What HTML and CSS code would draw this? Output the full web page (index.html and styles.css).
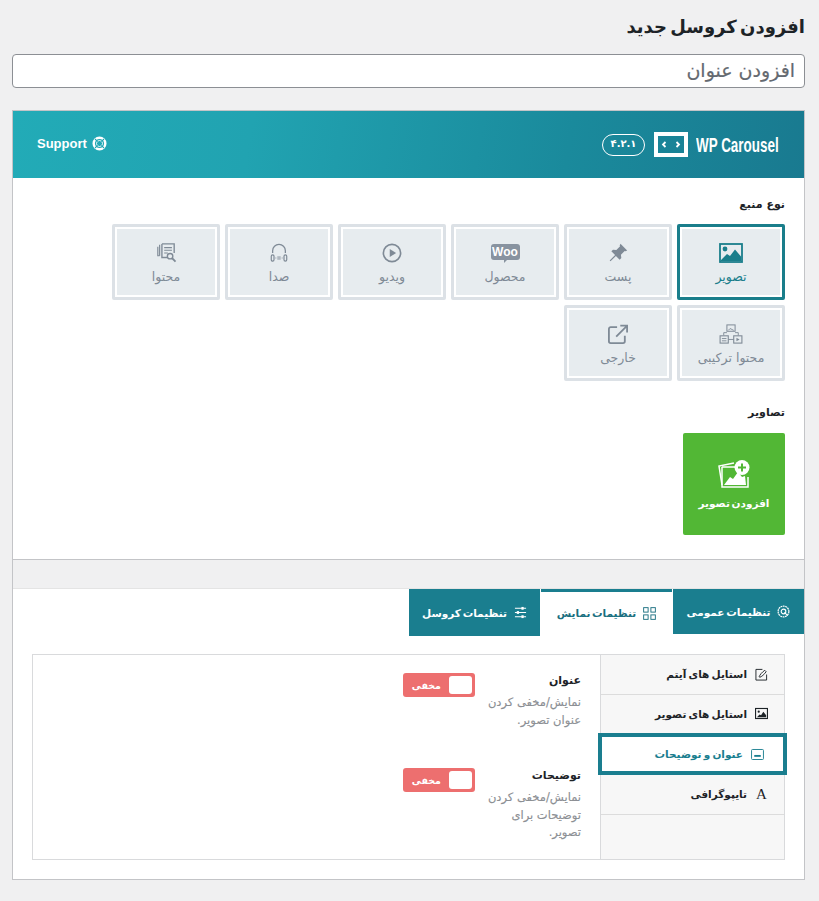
FILE: index.html
```html
<!DOCTYPE html>
<html lang="fa" dir="rtl">
<head>
<meta charset="utf-8">
<title>افزودن کروسل جدید</title>
<link rel="stylesheet" href="styles.css">
</head>
<body>
<h1 class="page-title">افزودن کروسل جدید</h1>
<div class="title-input">افزودن عنوان</div>
<main class="box">
  <header class="head">
    <div class="brand">
      <span class="brand-name" dir="ltr">WP Carousel</span>
      <svg class="brand-icon" viewBox="0 0 34 25"><rect x="2" y="2" width="30" height="21" fill="none" stroke="#fff" stroke-width="4"/><path d="M11.5 10l-2.5 2.500 2.500 2.500M22.500 10l2.500 2.500-2.500 2.500" fill="none" stroke="#fff" stroke-width="1.800"/></svg>
      <span class="version">۴.۲.۱</span>
    </div>
    <a class="support" dir="ltr">Support
      <svg class="support-icon" viewBox="0 0 16 16"><circle cx="8" cy="8" r="6.200" fill="none" stroke="#fff" stroke-width="2.600"/><circle cx="8" cy="8" r="3.200" fill="none" stroke="#fff" stroke-width="1"/><path d="M3.200 3.200l2.800 2.800M12.800 3.200L10 6M3.200 12.800L6 10M12.800 12.800L10 10" stroke="#1fa5b2" stroke-width="1.200"/></svg>
    </a>
  </header>

  <section class="source">
    <h2 class="label">نوع منبع</h2>
    <div class="cards">
      <div class="card active"><div class="card-in">
        <svg class="ic" viewBox="0 0 24 20"><rect x="1" y="1" width="22" height="18" fill="none" stroke="currentColor" stroke-width="1.800"/><circle cx="6" cy="6" r="2.400" fill="currentColor"/><path d="M2 17l6-6 3 2 5-6.500 6 7V18H2z" fill="currentColor"/></svg>
        <span>تصویر</span></div></div>
      <div class="card"><div class="card-in">
        <svg class="ic" viewBox="0 0 24 24"><path d="M15 1l8 8-2 1-1-.500-4.500 4.500.500 4-2 2-4.500-4.500L3 22l-1-1 6.500-6.500L4 10l2-2 4 .500L14.500 4 14 3z" fill="currentColor"/></svg>
        <span>پست</span></div></div>
      <div class="card"><div class="card-in">
        <span class="woo" dir="ltr">Woo</span>
        <span>محصول</span></div></div>
      <div class="card"><div class="card-in">
        <svg class="ic" viewBox="0 0 22 22"><circle cx="11" cy="11" r="9.500" fill="none" stroke="currentColor" stroke-width="1.800"/><path d="M8.500 6.500l7 4.500-7 4.500z" fill="currentColor"/></svg>
        <span>ویدیو</span></div></div>
      <div class="card"><div class="card-in">
        <svg class="ic" viewBox="0 0 22 22"><path d="M4 11V8.500a7 7 0 0 1 14 0V11" fill="none" stroke="currentColor" stroke-width="1.400"/><rect x="2.500" y="13" width="3" height="7" rx="1.500" fill="none" stroke="currentColor" stroke-width="1.300"/><rect x="16.500" y="13" width="3" height="7" rx="1.500" fill="none" stroke="currentColor" stroke-width="1.300"/><path d="M7.500 16v1M10 14.500v4M12 14.500v4M14.500 16v1" stroke="currentColor" stroke-width="1"/></svg>
        <span>صدا</span></div></div>
      <div class="card"><div class="card-in">
        <svg class="ic" viewBox="0 0 22 22"><path d="M2 4v10h2M4 2v12" stroke="currentColor" stroke-width="1.300" fill="none"/><path d="M6.500 1H20v10M6.500 1v15H13" fill="none" stroke="currentColor" stroke-width="1.500"/><path d="M9 5h8.500M9 8h8.500M9 11h4" stroke="currentColor" stroke-width="1.300"/><circle cx="15.500" cy="14.500" r="3" fill="none" stroke="currentColor" stroke-width="1.500"/><path d="M17.500 16.500l4 4" stroke="currentColor" stroke-width="2"/></svg>
        <span>محتوا</span></div></div>
      <div class="card"><div class="card-in">
        <svg class="ic" viewBox="0 0 26 22"><rect x="8.500" y="1" width="9" height="7" fill="none" stroke="currentColor" stroke-width="1.100"/><path d="M10 7l2-2 2 1 2 1" stroke="currentColor" fill="none"/><path d="M8.500 9.500H5v3M17.500 9.500H21v3" fill="none" stroke="currentColor"/><rect x="1" y="13" width="9" height="8" fill="none" stroke="currentColor" stroke-width="1.200"/><path d="M3 16h5M3 18.500h5" stroke="currentColor"/><rect x="16" y="13" width="9" height="8" fill="none" stroke="currentColor" stroke-width="1.200"/><path d="M19 15l3.500 2-3.500 2z" fill="currentColor"/><path d="M10 17h6" stroke="currentColor"/></svg>
        <span>محتوا ترکیبی</span></div></div>
      <div class="card"><div class="card-in">
        <svg class="ic" viewBox="0 0 22 22"><path d="M10 3.500H3a2 2 0 0 0-2 2V19a2 2 0 0 0 2 2h13.500a2 2 0 0 0 2-2v-6" fill="none" stroke="currentColor" stroke-width="2"/><path d="M9 14L20 3M13.500 1.800H21v7.500" fill="none" stroke="currentColor" stroke-width="2"/></svg>
        <span>خارجی</span></div></div>
    </div>
    <h2 class="label label-images">تصاویر</h2>
    <button class="add-btn" type="button">
      <svg class="add-ic" viewBox="0 0 34 32"><path d="M5 26L2 7l15-3" fill="none" stroke="#fff" stroke-width="1.500"/><path d="M5 8h16v3M5 8v20h26V18" fill="none" stroke="#fff" stroke-width="1.500"/><path d="M7 26l6-8 3 2 5-7 4 5 3-1 1 9z" fill="#fff"/><circle cx="25" cy="8.500" r="7.500" fill="#fff"/><path d="M25 4.500v8M21 8.500h8" stroke="#52b735" stroke-width="2"/></svg>
      <span>افزودن تصویر</span>
    </button>
  </section>

  <div class="band"></div>

  <section class="settings">
    <nav class="tabs">
      <div class="tab">
        <svg class="tab-ic" viewBox="0 0 14 14"><circle cx="7" cy="7" r="5.800" fill="none" stroke="currentColor" stroke-width="1.300" stroke-dasharray="2 .6"/><circle cx="7" cy="7" r="2.500" fill="none" stroke="currentColor" stroke-width="1.200"/><path d="M8 8l3.500 3.500" stroke="currentColor" stroke-width="1.300"/></svg>
        <span>تنظیمات عمومی</span></div>
      <div class="tab tab-active">
        <svg class="tab-ic" viewBox="0 0 14 14"><rect x=".7" y=".7" width="4.800" height="4.800" fill="none" stroke="currentColor"/><rect x="8.500" y=".7" width="4.800" height="4.800" fill="none" stroke="currentColor"/><rect x=".7" y="8.500" width="4.800" height="4.800" fill="none" stroke="currentColor"/><rect x="8.500" y="8.500" width="4.800" height="4.800" fill="none" stroke="currentColor"/></svg>
        <span>تنظیمات نمایش</span></div>
      <div class="tab tab-tall">
        <svg class="tab-ic" viewBox="0 0 14 14"><path d="M1 2.500h12M1 7h12M1 11.500h12" stroke="currentColor" stroke-width="1.100"/><rect x="8" y="1" width="2.400" height="3" fill="currentColor"/><rect x="3" y="5.500" width="2.400" height="3" fill="currentColor"/><rect x="8" y="10" width="2.400" height="3" fill="currentColor"/></svg>
        <span>تنظیمات کروسل</span></div>
    </nav>

    <div class="panel">
      <aside class="side">
        <div class="side-item">
          <svg class="side-ic" viewBox="0 0 14 14"><path d="M8 1.500H1v11.500h11.500V7" fill="none" stroke="currentColor"/><path d="M4.500 9.500c.500-2 3-5 6-7l1.500 1.500c-2 3-5 5.500-7 6z" fill="none" stroke="currentColor"/></svg>
          <span>استایل های آیتم</span></div>
        <div class="side-item">
          <svg class="side-ic" viewBox="0 0 14 12"><rect x=".6" y=".6" width="12.800" height="10.800" fill="none" stroke="currentColor" stroke-width="1.200"/><path d="M2 10l3-3 1.500 1L9 4l3 4v2z" fill="currentColor"/><circle cx="4" cy="4" r="1.200" fill="currentColor"/></svg>
          <span>استایل های تصویر</span></div>
        <div class="side-item side-active">
          <svg class="side-ic" viewBox="0 0 14 12"><rect x=".6" y=".6" width="12.800" height="10.800" rx="1" fill="none" stroke="currentColor"/><path d="M3.500 6.500h7v2h-7z" fill="currentColor"/></svg>
          <span>عنوان و توضیحات</span></div>
        <div class="side-item">
          <span class="side-a">A</span>
          <span>تایپوگرافی</span></div>
      </aside>
      <div class="fields">
        <div class="field">
          <div class="field-text">
            <h3 class="field-title">عنوان</h3>
            <p class="field-desc">نمایش/مخفی کردن عنوان تصویر.</p>
          </div>
          <div class="toggle"><span class="knob"></span><span>مخفی</span></div>
        </div>
        <div class="field">
          <div class="field-text">
            <h3 class="field-title">توضیحات</h3>
            <p class="field-desc">نمایش/مخفی کردن توضیحات برای تصویر.</p>
          </div>
          <div class="toggle"><span class="knob"></span><span>مخفی</span></div>
        </div>
      </div>
    </div>
  </section>
</main>
</body>
</html>
```
FILE: styles.css
```css
* { box-sizing: border-box; }
html, body { margin: 0; }
body {
  background: #f0f0f1;
  padding: 0 14px 0 12px;
  height: 901px;
  overflow: hidden;
  font-family: "DejaVu Sans", "Noto Sans", sans-serif;
  color: #1d2327;
}
.page-title {
  margin: 0;
  padding-top: 13px;
  height: 54px;
  font-size: 18px;
  line-height: 27px;
  font-weight: 700;
  word-spacing: -3px;
}
.title-input {
  height: 34px;
  background: #fff;
  border: 1px solid #8c8f94;
  border-radius: 4px;
  padding: 0 9px;
  font-size: 19px;
  line-height: 30px;
  color: #646970;
  -webkit-text-stroke: .2px #646970;
}
.box {
  margin-top: 22px;
  height: 770px;
  background: #fff;
  border: 1px solid #c3c4c7;
}
.head {
  height: 67px;
  background: linear-gradient(100deg, #22abb7 0%, #21a3b1 30%, #1a8a9c 70%, #197a90 100%);
  display: flex;
  align-items: center;
  justify-content: space-between;
  padding: 0 24px 0 24px;
  color: #fff;
}
.brand { display: flex; align-items: center; }
.brand-name {
  font-family: "Liberation Sans", sans-serif;
  font-weight: 700;
  font-size: 21px;
  width: 84px;
  white-space: nowrap;
  text-align: left;
  transform: scaleX(.64);
  transform-origin: left center;
}
.brand-icon { width: 34px; height: 25px; margin: 0 8px; }
.version {
  width: 43px;
  height: 22px;
  margin-right: 1px;
  border: 1px solid #fff;
  border-radius: 11px;
  font-size: 10px;
  font-weight: 700;
  line-height: 18px;
  text-align: center;
}
.support {
  display: flex;
  align-items: center;
  gap: 5px;
  margin-top: -2px;
  font-family: "Liberation Sans", sans-serif;
  font-weight: 700;
  font-size: 13px;
}
.support-icon { width: 15px; height: 15px; }
.source {
  height: 382px;
  padding: 20px 19px 0;
  border-bottom: 1px solid #c3c4c7;
}
.label {
  margin: 0;
  font-size: 11px;
  line-height: 14px;
  font-weight: 700;
}
.cards {
  margin-top: 12px;
  display: flex;
  flex-wrap: wrap;
  gap: 5px;
}
.card {
  width: 108px;
  height: 76px;
  border: 3px solid #dce1e6;
  background: #fff;
  padding: 2px;
  border-radius: 2px;
  color: #7f8a96;
}
.card.active { border-color: #1a7e8b; color: #1a7e8b; }
.card-in {
  height: 100%;
  background: #e7ecef;
  display: flex;
  flex-direction: column;
  align-items: center;
  justify-content: center;
  gap: 7px;
  padding-top: 3px;
  font-size: 12.500px;
  line-height: 14px;
}
.ic { width: 24px; height: 20px; }
.woo {
  position: relative;
  background: #8893a0;
  color: #fff;
  border-radius: 3px;
  width: 29px;
  height: 16px;
  margin: 1px 0 3px;
  font-family: "Liberation Sans", sans-serif;
  font-weight: 700;
  font-size: 12px;
  line-height: 16px;
  text-align: center;
}
.woo::after {
  content: "";
  position: absolute;
  left: 13px;
  bottom: -3px;
  border-top: 3px solid #8893a0;
  border-right: 3px solid transparent;
}
.label-images { margin-top: 25px; }
.add-btn {
  display: flex;
  flex-direction: column;
  align-items: center;
  gap: 6px;
  margin-top: 13px;
  width: 102px;
  height: 102px;
  padding: 26px 0 0;
  border: 0;
  border-radius: 2px;
  background: #52b735;
  color: #fff;
  font-family: inherit;
  font-size: 10.500px;
  font-weight: 700;
  word-spacing: -2px;
}
.add-ic { width: 34px; height: 32px; }
.band {
  height: 29px;
  background: #f0f0f1;
  border-bottom: 1px solid #e4e4e4;
}
.tabs {
  display: flex;
  gap: 1px;
  align-items: flex-start;
}
.tab {
  width: 131px;
  height: 45px;
  background: #1a7e8f;
  color: #fff;
  display: flex;
  align-items: center;
  justify-content: center;
  gap: 7px;
  font-size: 10.500px;
  font-weight: 700;
  word-spacing: -2px;
}
.tab-active {
  background: #fff;
  color: #1a6f80;
  border-top: 3px solid #1a7e8f;
}
.tab-tall { height: 47px; }
.tab-ic { width: 13px; height: 13px; flex: none; }
.panel {
  margin: 18px 19px 0;
  height: 206px;
  border: 1px solid #d9dadc;
  display: flex;
}
.side {
  width: 184px;
  background: #f7f7f7;
  border-left: 1px solid #d9dadc;
  font-size: 10.500px;
  font-weight: 700;
  word-spacing: -1.500px;
}
.side-item {
  height: 39.500px;
  padding: 0 16px 0 0;
  border-bottom: 1px solid #dcdcdc;
  display: flex;
  align-items: center;
  gap: 8px;
}
.side-ic { width: 13px; height: 13px; flex: none; }
.side-a {
  font-family: "Liberation Serif", serif;
  font-size: 15px;
  font-weight: 400;
  width: 13px;
  text-align: center;
}
.side-active {
  height: 42px;
  margin: -1px -3px 0 -3px;
  padding-right: 19px;
  background: #fff;
  border: 4px solid #1a7e8f;
  color: #1a7e8f;
  position: relative;
}
.fields {
  flex: 1;
  padding: 17px 19px 0;
}
.field {
  display: flex;
  gap: 6px;
  align-items: flex-start;
  margin-bottom: 38px;
}
.field-text { width: 100px; }
.field-title {
  margin: 0;
  font-size: 11px;
  line-height: 18px;
  font-weight: 700;
}
.field-desc {
  margin: 4px 0 0;
  font-size: 11.500px;
  line-height: 17.500px;
  color: #8c8f94;
  -webkit-text-stroke: .15px #8c8f94;
}
.toggle {
  width: 72px;
  height: 24px;
  margin-top: 1px;
  background: #ed6f6f;
  border-radius: 3px;
  display: flex;
  align-items: center;
  gap: 8px;
  padding: 0 3px;
  color: #fff;
  font-size: 9.500px;
  font-weight: 700;
}
.knob {
  width: 23px;
  height: 18px;
  background: #fff;
  border-radius: 3px;
}
```
